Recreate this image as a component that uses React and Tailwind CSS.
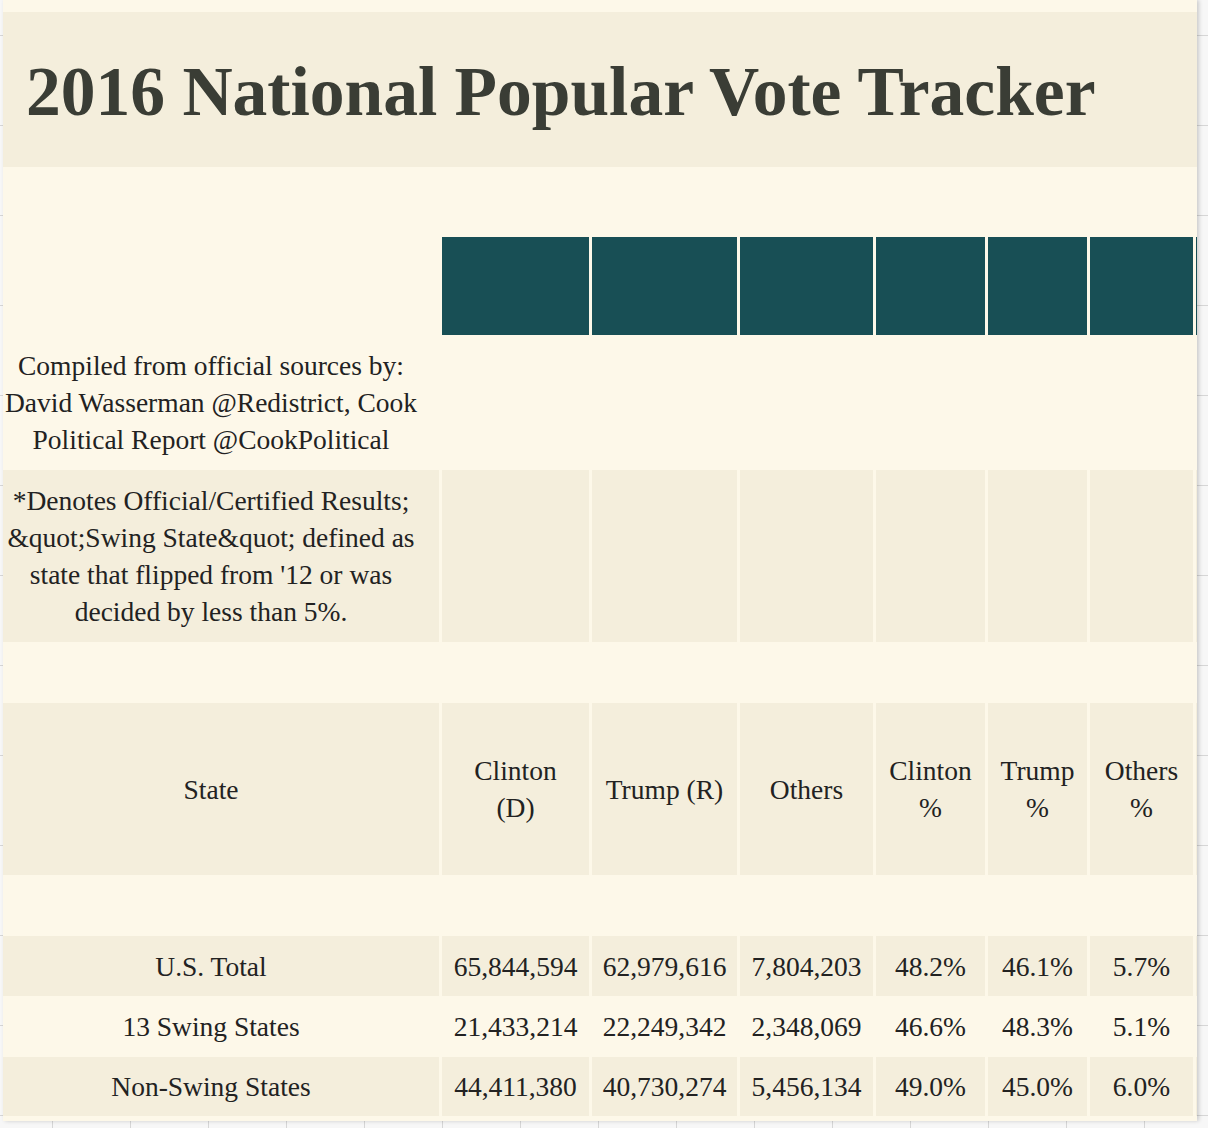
import React from "react";

const COLS = "grid grid-cols-[436px_147px_145px_133px_109px_99px_103px_1px] gap-x-[3px]";

function Row({ h, cells }) {
  return (
    <div className={`${COLS} ${h}`}>
      {cells.map((c, i) => (
        <div
          key={i}
          className={`flex items-center justify-center text-center whitespace-nowrap ${c.bg || ""} ${i === 0 ? "pr-[20px]" : ""}`}
        >
          {c.content}
        </div>
      ))}
    </div>
  );
}

const beige = "bg-[#f4eedc]";
const teal = "bg-[#184f55]";

function lines(arr) {
  return (
    <span>
      {arr.map((l, i) => (
        <React.Fragment key={i}>
          {l}
          {i < arr.length - 1 && <br />}
        </React.Fragment>
      ))}
    </span>
  );
}

const data = [
  ["U.S. Total", "65,844,594", "62,979,616", "7,804,203", "48.2%", "46.1%", "5.7%", beige],
  ["13 Swing States", "21,433,214", "22,249,342", "2,348,069", "46.6%", "48.3%", "5.1%", ""],
  ["Non-Swing States", "44,411,380", "40,730,274", "5,456,134", "49.0%", "45.0%", "6.0%", beige],
];

export default function App() {
  return (
    <div className="w-[1208px] h-[1128px] overflow-hidden bg-[#f7f7f7] bg-[linear-gradient(to_right,#d6d6d6_1px,transparent_1px),linear-gradient(to_bottom,#d6d6d6_1px,transparent_1px)] bg-size-[78px_90px] bg-position-[52px_35px] font-['Liberation_Serif',serif]">
      <div className="ml-[3px] w-[1194px] bg-[#fdf8e9] shadow-[2px_0_4px_rgba(0,0,0,0.18)] text-[#222222] text-[27.5px] leading-[37px]">
        <div className="h-[12px]" />
        <div className="h-[155px] bg-[#f4eedc] flex items-center pl-[23px] pt-[4px]">
          <h1 className="text-[69.5px] font-bold text-[#3a3d35] leading-none whitespace-nowrap">
            2016 National Popular Vote Tracker
          </h1>
        </div>
        <div className="h-[70px]" />
        <Row
          h="h-[98px]"
          cells={[{}, { bg: teal }, { bg: teal }, { bg: teal }, { bg: teal }, { bg: teal }, { bg: teal }, { bg: teal }]}
        />
        <Row
          h="h-[135px]"
          cells={[
            {
              content: lines([
                "Compiled from official sources by:",
                "David Wasserman @Redistrict, Cook",
                "Political Report @CookPolitical",
              ]),
            },
            {}, {}, {}, {}, {}, {}, {},
          ]}
        />
        <Row
          h="h-[172px]"
          cells={[
            {
              bg: beige,
              content: lines([
                "*Denotes Official/Certified Results;",
                "&quot;Swing State&quot; defined as",
                "state that flipped from '12 or was",
                "decided by less than 5%.",
              ]),
            },
            { bg: beige }, { bg: beige }, { bg: beige }, { bg: beige }, { bg: beige }, { bg: beige }, { bg: beige },
          ]}
        />
        <div className="h-[61px]" />
        <Row
          h="h-[172px]"
          cells={[
            { bg: beige, content: "State" },
            { bg: beige, content: lines(["Clinton", "(D)"]) },
            { bg: beige, content: "Trump (R)" },
            { bg: beige, content: "Others" },
            { bg: beige, content: lines(["Clinton", "%"]) },
            { bg: beige, content: lines(["Trump", "%"]) },
            { bg: beige, content: lines(["Others", "%"]) },
            { bg: beige },
          ]}
        />
        <div className="h-[61px]" />
        {data.map((r, i) => (
          <Row
            key={i}
            h={i === 0 ? "h-[60px]" : i === 1 ? "h-[61px]" : "h-[59px]"}
            cells={[
              ...r.slice(0, 7).map((t) => ({ bg: r[7], content: t })),
              { bg: r[7] },
            ]}
          />
        ))}
        <div className="h-[5px]" />
      </div>
    </div>
  );
}
